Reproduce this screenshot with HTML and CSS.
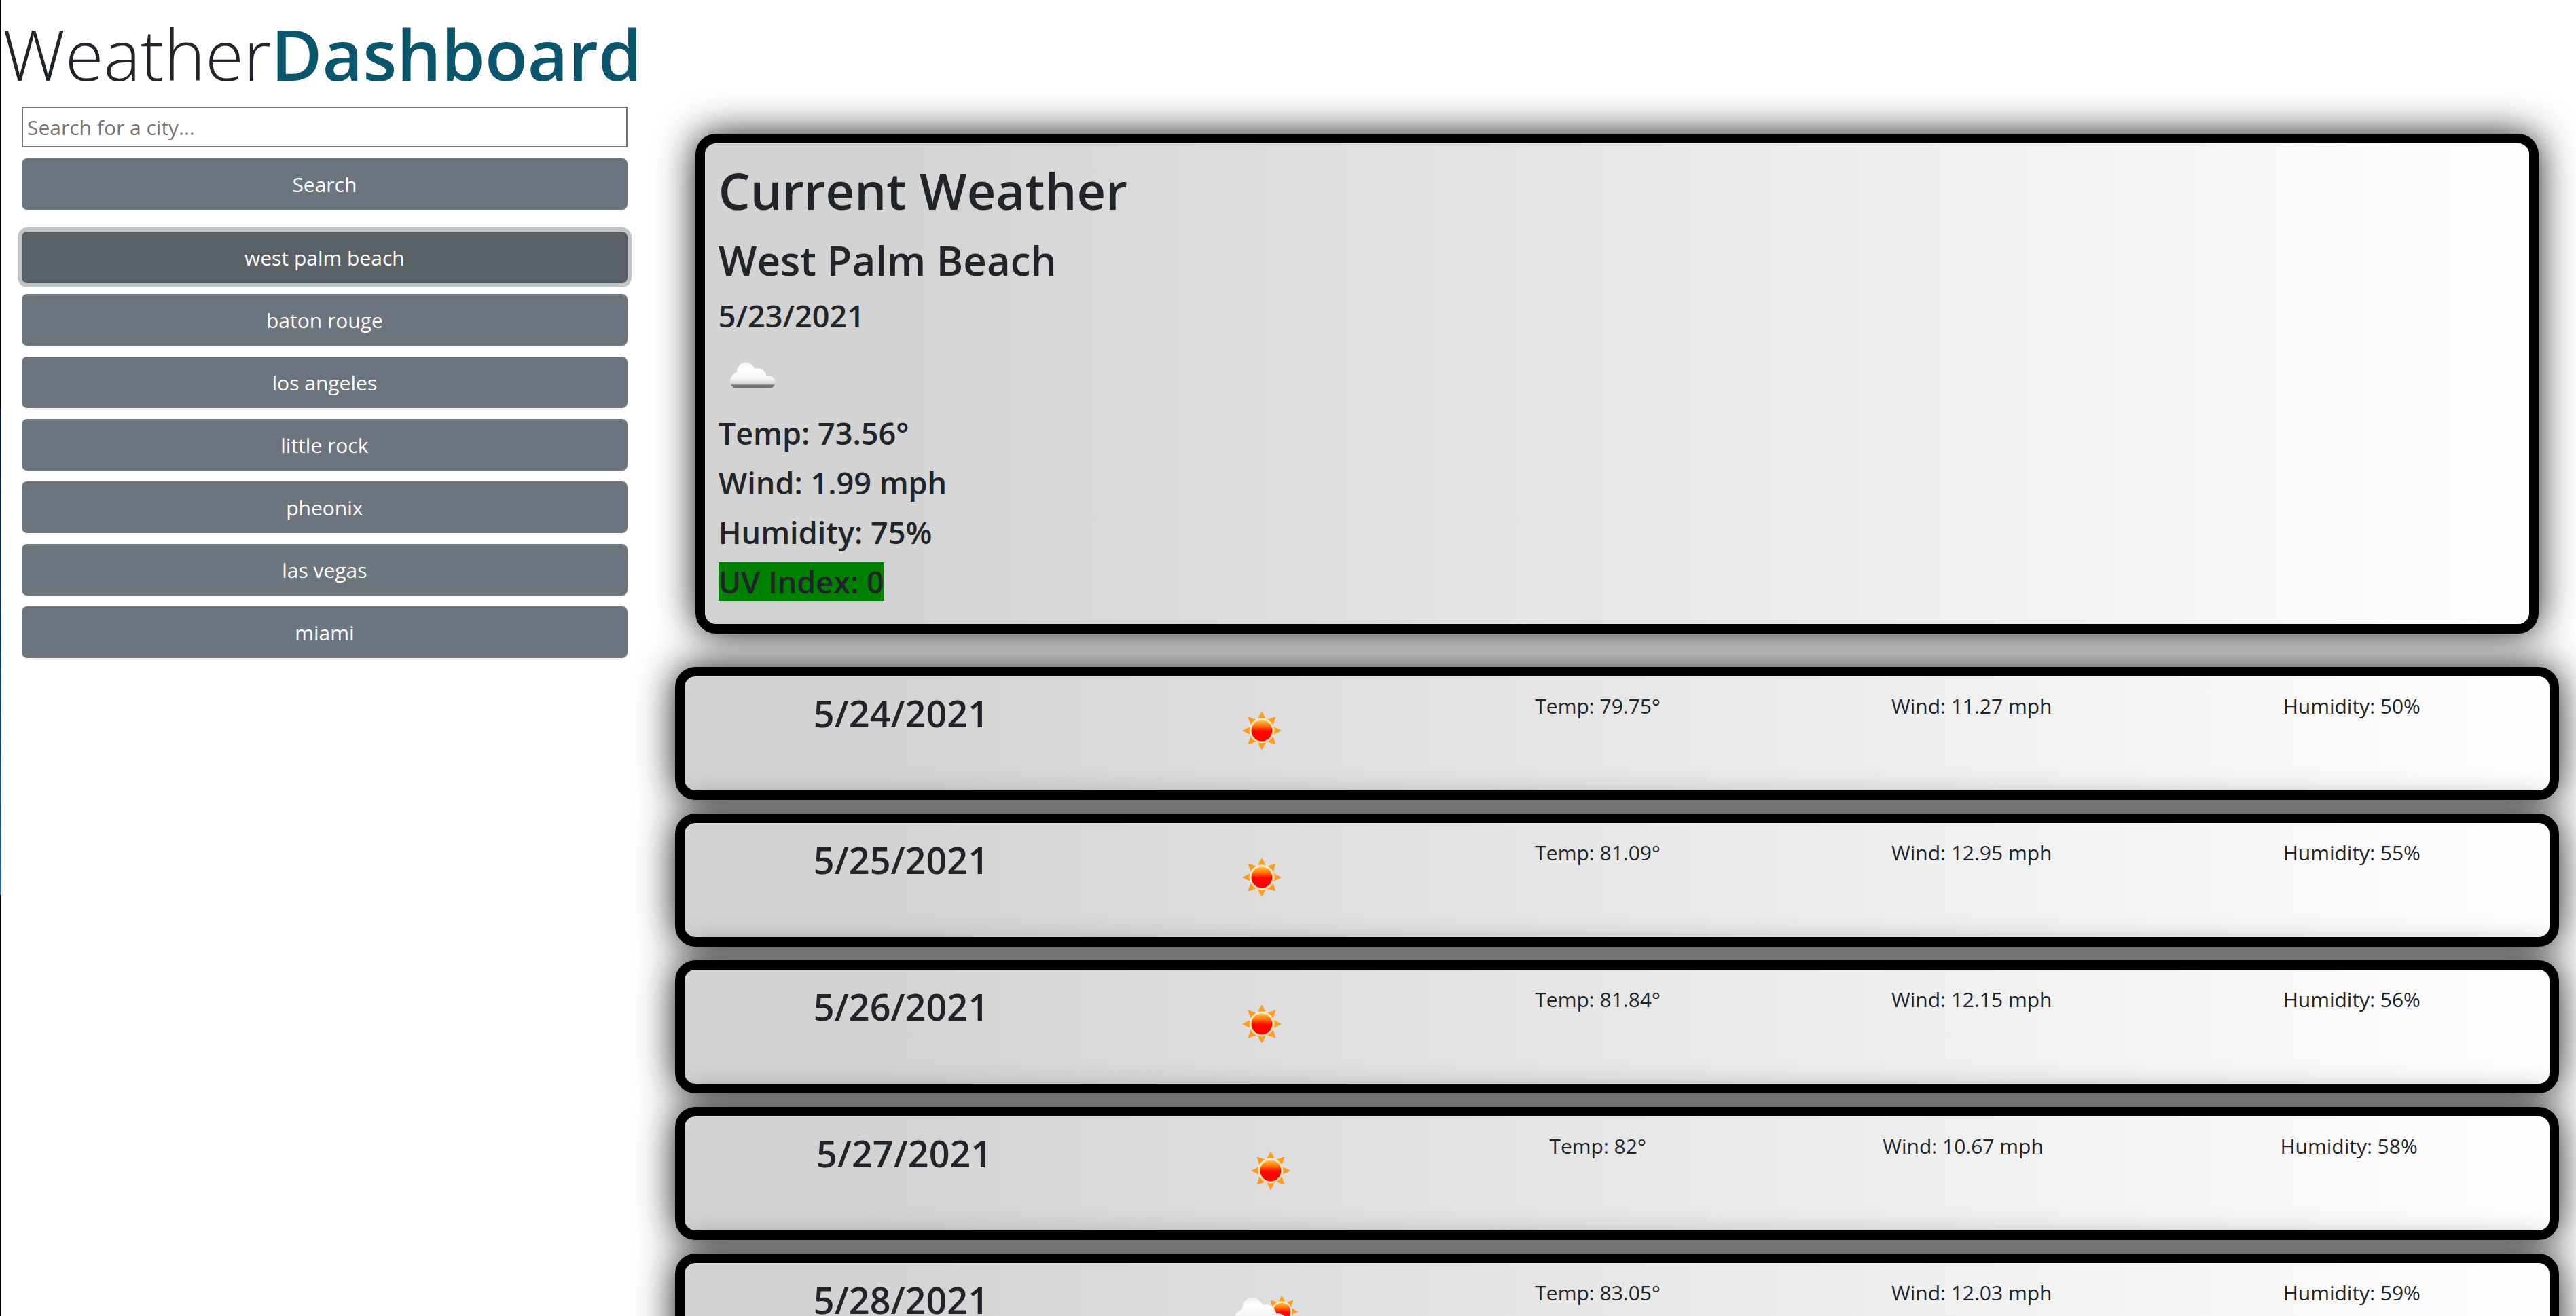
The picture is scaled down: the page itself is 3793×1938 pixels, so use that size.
FILE: index.html
```html
<!DOCTYPE html>
<html lang="en">
<head>
<meta charset="utf-8">
<title>Weather Dashboard</title>
<link rel="stylesheet" href="styles.css">
</head>
<body>
<svg class="sprite" aria-hidden="true">
  <defs>
    <linearGradient id="sun-core" x1="0" y1="0" x2="0" y2="1">
      <stop offset="0" stop-color="#ffd060"/><stop offset=".28" stop-color="#ff7a00"/><stop offset=".52" stop-color="#ff0800"/><stop offset="1" stop-color="#ff0000"/>
    </linearGradient>
    <linearGradient id="cloud-fill" x1="0" y1="0" x2="0" y2="1">
      <stop offset="0" stop-color="#f0f0f0"/><stop offset=".25" stop-color="#fff"/><stop offset=".65" stop-color="#f4f4f4"/><stop offset=".84" stop-color="#d4d4d4"/><stop offset=".9" stop-color="#777"/><stop offset="1" stop-color="#6c6c6c"/>
    </linearGradient>
    <symbol id="sun" viewBox="0 0 100 100">
      <g fill="#ff9a1c">
        <path id="ray" d="M50 21 56 33H44Z"/>
        <use href="#ray" transform="rotate(45 50 50)"/><use href="#ray" transform="rotate(90 50 50)"/><use href="#ray" transform="rotate(135 50 50)"/><use href="#ray" transform="rotate(180 50 50)"/><use href="#ray" transform="rotate(225 50 50)"/><use href="#ray" transform="rotate(270 50 50)"/><use href="#ray" transform="rotate(315 50 50)"/>
      </g>
      <circle cx="50" cy="50" r="17" fill="url(#sun-core)" stroke="#ffe9c4" stroke-width="3"/>
    </symbol>
    <symbol id="cloud" viewBox="0 0 100 100">
      <path d="M23 62C14 56 15 45 27 39C28 21 48 20 53 34C61 31 69 37 71 45C78 43 85 49 83 56C82 60 80 62 77 62Z" fill="url(#cloud-fill)"/>
    </symbol>
    <symbol id="partly" class="partly" viewBox="0 0 100 100">
      <use href="#sun" x="38" y="0" width="83" height="83"/>
      <use href="#cloud" x="-10" y="-7" width="115" height="115"/>
    </symbol>
  </defs>
</svg>
<div class="page">
  <aside class="sidebar">
    <h1 class="title">Weather<span class="title-strong">Dashboard</span></h1>
    <form class="search">
      <input class="search-input" type="text" aria-label="City" placeholder="Search for a city...">
      <button class="btn" type="button">Search</button>
    </form>
    <div class="history">
      <button class="btn active" type="button">west palm beach</button>
      <button class="btn" type="button">baton rouge</button>
      <button class="btn" type="button">los angeles</button>
      <button class="btn" type="button">little rock</button>
      <button class="btn" type="button">pheonix</button>
      <button class="btn" type="button">las vegas</button>
      <button class="btn" type="button">miami</button>
    </div>
  </aside>
  <main class="main">
    <section class="card current">
      <h2 class="heading">Current Weather</h2>
      <h3 class="city">West Palm Beach</h3>
      <p class="fact">5/23/2021</p>
      <svg class="icon" role="img" aria-label="Cloudy"><use href="#cloud"/></svg>
      <p class="fact">Temp: 73.56°</p>
      <p class="fact">Wind: 1.99 mph</p>
      <p class="fact">Humidity: 75%</p>
      <p class="fact"><span class="uv">UV Index: 0</span></p>
    </section>
    <section class="card day">
      <h3 class="date">5/24/2021</h3><svg class="icon" role="img" aria-label="Sunny"><use href="#sun"/></svg>
      <p>Temp: 79.75°</p><p>Wind: 11.27 mph</p><p>Humidity: 50%</p>
    </section>
    <section class="card day">
      <h3 class="date">5/25/2021</h3><svg class="icon" role="img" aria-label="Sunny"><use href="#sun"/></svg>
      <p>Temp: 81.09°</p><p>Wind: 12.95 mph</p><p>Humidity: 55%</p>
    </section>
    <section class="card day">
      <h3 class="date">5/26/2021</h3><svg class="icon" role="img" aria-label="Sunny"><use href="#sun"/></svg>
      <p>Temp: 81.84°</p><p>Wind: 12.15 mph</p><p>Humidity: 56%</p>
    </section>
    <section class="card day">
      <h3 class="date">5/27/2021</h3><svg class="icon" role="img" aria-label="Sunny"><use href="#sun"/></svg>
      <p>Temp: 82°</p><p>Wind: 10.67 mph</p><p>Humidity: 58%</p>
    </section>
    <section class="card day">
      <h3 class="date">5/28/2021</h3><svg class="icon" role="img" aria-label="Partly cloudy" viewBox="0 0 100 100"><use href="#partly" width="100" height="100"/></svg>
      <p>Temp: 83.05°</p><p>Wind: 12.03 mph</p><p>Humidity: 59%</p>
    </section>
  </main>
</div>
</body>
</html>
```
FILE: styles.css
```css
* { box-sizing: border-box; }

html { background: #fff; }

body {
  margin: 0;
  height: 100vh;
  overflow: hidden;
  border-left: 2px solid #000;
  border-image: linear-gradient(#000 31%, #00133d 31%, #003478 49%, #1b57a8 64%, #2864c0 68%, #000 68%) 1;
  border-image-slice: 0 0 0 1;
  font-family: "Open Sans", "Noto Sans", sans-serif;
  font-size: 30px;
  line-height: 48px;
  color: #212529;
}

h1, h2, h3, p { margin: 0; }

.sprite { position: absolute; width: 0; height: 0; }

.page {
  display: grid;
  grid-template-columns: minmax(0, 1fr) minmax(0, 3fr);
}

.sidebar { padding: 12px 26px 0 30px; }

.title {
  margin: 0 -28px 11px;
  font-size: 103px;
  line-height: 134px;
  font-weight: 300;
  white-space: nowrap;
}

.title-strong { font-weight: 600; color: #0c566d; }

.search, .history { display: flex; flex-direction: column; gap: 16px; }
.history { margin-top: 32px; }

.search-input {
  width: 100%;
  height: 60px;
  padding: 2px 6px;
  border: 2px solid #767676;
  font: inherit;
  color: inherit;
}
.search-input::placeholder { color: #757575; }

.btn {
  width: 100%;
  padding: 13px 24px 11px;
  border: 2px solid #6c757d;
  border-radius: 8px;
  background: #6c757d;
  color: #fff;
  font: inherit;
}
.btn.active {
  border-color: #545b62;
  background: #5a6268;
  box-shadow: 0 0 0 6px #c1c4c7;
}

.main { padding: 197px 25px 0 44px; }

.card {
  border: 14px solid #000;
  border-radius: 30px;
  background: linear-gradient(to right, #d3d3d3 10%, #fff);
  background-origin: border-box;
  box-shadow: 0 0 56px rgba(0, 0, 0, .9);
}

.current { margin: 0 30px 49px; padding: 20px 20px 18px; }
.heading { margin-bottom: 14px; font-size: 74px; line-height: 100px; font-weight: 600; }
.city { margin-bottom: 14px; font-size: 60px; line-height: 77px; font-weight: 600; }
.fact { margin-bottom: 16px; font-size: 45px; line-height: 57px; font-weight: 600; }
.uv { display: inline-block; background: #008000; }

.icon { display: block; width: 100px; height: 100px; overflow: visible; }
.partly { overflow: visible; }

.day {
  display: flex;
  justify-content: space-around;
  height: 196px;
  margin-bottom: 20px;
  padding: 20px;
}
.day .icon { width: 124px; margin-top: 10px; }
.date { font-size: 54px; line-height: 68px; font-weight: 600; }
```
